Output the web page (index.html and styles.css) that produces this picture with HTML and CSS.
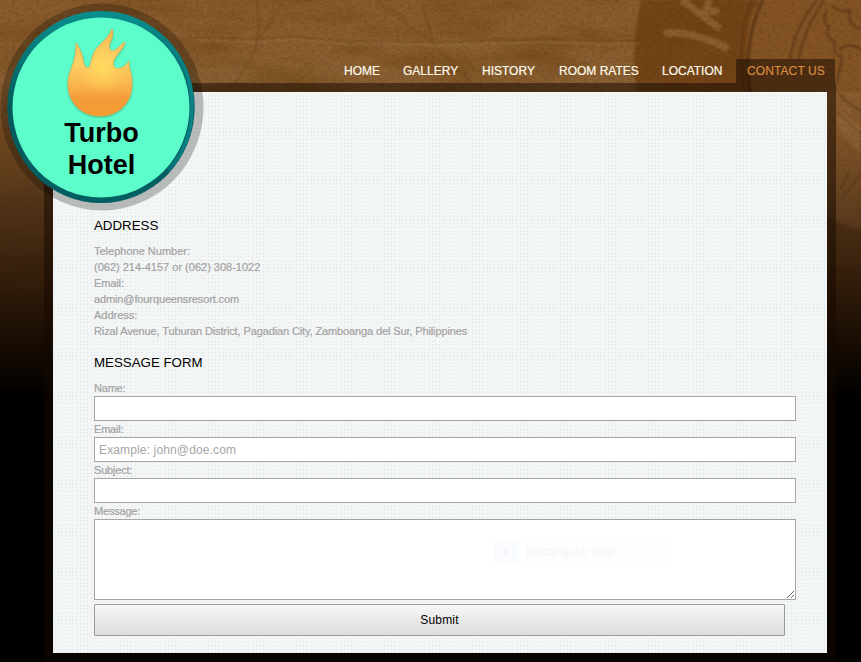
FILE: index.html
```
<!DOCTYPE html>
<html lang="en">
<head>
<meta charset="utf-8">
<title>Turbo Hotel - Contact Us</title>
<link rel="stylesheet" href="styles.css">
</head>
<body>
<svg class="backdrop" width="861" height="662" viewBox="0 0 861 662" aria-hidden="true">
  <defs>
    <linearGradient id="wood" x1="0" y1="0" x2="0" y2="400" gradientUnits="userSpaceOnUse">
      <stop offset="0" stop-color="#8b5c2d"/>
      <stop offset=".2" stop-color="#8b6133"/>
      <stop offset=".34" stop-color="#704821"/>
      <stop offset=".5" stop-color="#52351a"/>
      <stop offset=".7" stop-color="#321d0b"/>
      <stop offset=".86" stop-color="#170c02"/>
      <stop offset="1" stop-color="#000"/>
    </linearGradient>
    <linearGradient id="fade" x1="0" y1="0" x2="0" y2="300" gradientUnits="userSpaceOnUse">
      <stop offset="0" stop-color="#fff"/>
      <stop offset=".3" stop-color="#fff"/>
      <stop offset="1" stop-color="#000"/>
    </linearGradient>
    <mask id="fademask"><rect width="861" height="400" fill="url(#fade)"/></mask>
    <filter id="grain" x="0" y="0" width="100%" height="100%" color-interpolation-filters="sRGB">
      <feTurbulence type="fractalNoise" baseFrequency=".25 .4" numOctaves="3" seed="4"/>
      <feColorMatrix values="0 0 0 0 .25  0 0 0 0 .13  0 0 0 0 .03  1.3 0 0 0 -.48"/>
    </filter>
    <filter id="stain" x="0" y="0" width="100%" height="100%" color-interpolation-filters="sRGB">
      <feTurbulence type="fractalNoise" baseFrequency=".012 .04" numOctaves="3" seed="9"/>
      <feColorMatrix values="0 0 0 0 .44  0 0 0 0 .27  0 0 0 0 .08  1.4 0 0 0 -.6"/>
    </filter>
    <filter id="soft"><feGaussianBlur stdDeviation=".9"/></filter>
  </defs>
  <rect width="861" height="662" fill="#000"/>
  <rect width="861" height="400" fill="url(#wood)"/>
  <g mask="url(#fademask)">
    <rect width="861" height="400" filter="url(#stain)"/>
    <g filter="url(#soft)" fill="none">
      <path d="M641 0Q630 48 637 92H861V0Z" fill="#6c3d10" fill-opacity=".75"/>
      <path d="M664 33Q695 31 728 49M682 0L720 29M710 0L705 12L719 11" stroke="#946a38" stroke-width="7" stroke-opacity=".75"/>
      <path d="M759 0Q735 40 757 110Q782 208 861 230V0Z" fill="#936535" fill-opacity=".55"/>
      <path d="M763 0Q742 40 751 100Q775 205 861 234" stroke="#4c2a0b" stroke-width="3" stroke-opacity=".7"/>
      <path d="M752 0Q735 40 745 95" stroke="#4c2a0b" stroke-width="1.500" stroke-opacity=".6"/>
      <path d="M817 0Q793 30 790 60M824 0Q804 30 798 60M827 10Q821 20 829 27Q824 36 835 42Q831 53 842 57L837 83M832 5Q838 13 850 10Q846 25 861 29M839 50Q850 42 861 49M840 94Q846 103 861 111M838 113L861 134M840 190L850 171M842 198L861 174" stroke="#4c2a0b" stroke-width="2.200" stroke-opacity=".6"/>
      <path d="M839 112L861 126V154Q843 139 836 125Z" fill="#a57a49" fill-opacity=".4"/>
      <path d="M195 38L230 39L258 40L290 37L325 40L345 42L378 42L440 43L500 41L560 40L600 42L640 41" stroke="#5f3b18" stroke-width="1.200" stroke-opacity=".75"/>
      <path d="M195 40L230 41L258 42L290 39L325 42L345 44L378 43L440 45L500 43L560 42L600 44L640 43" stroke="#aa804c" stroke-width="1" stroke-opacity=".8"/>
      <path d="M234 84L251 59L256 45L259 25L257 4M259 38L283 2M375 0L420 34L433 41L422 5M390 7L408 22M433 44L470 82" stroke="#593612" stroke-width="1" stroke-opacity=".6"/>
    </g>
    <rect width="861" height="400" filter="url(#grain)" opacity=".32"/>
  </g>
</svg>
<div class="page">
  <nav class="menu">
    <a class="w-home">HOME</a><a class="w-gallery">GALLERY</a><a class="w-history">HISTORY</a><a class="w-rooms">ROOM RATES</a><a class="w-location">LOCATION</a><a class="current">CONTACT US</a>
  </nav>
  <main class="frame">
    <div class="panel">
      <h2>ADDRESS</h2>
      <p>Telephone Number:<br>(062) 214-4157 or (062) 308-1022<br><span class="tight">Email:</span><br><span class="tight">admin@fourqueensresort.com</span><br>Address:<br><span class="tight">Rizal Avenue, Tuburan District, Pagadian City, Zamboanga del Sur, Philippines</span></p>
      <h2 class="form-title">MESSAGE FORM</h2>
      <form>
        <label for="name">Name:</label>
        <input id="name" type="text">
        <label for="email">Email:</label>
        <input id="email" type="text" placeholder="Example: john@doe.com">
        <label for="subject">Subject:</label>
        <input id="subject" type="text">
        <label for="message">Message:</label>
        <div class="message-box">
          <textarea id="message"></textarea>
          <div class="snip"><span class="snip-icon"><i></i></span><span class="snip-text">Rectangular Snip</span></div>
        </div>
        <button type="button">Submit</button>
      </form>
    </div>
  </main>
</div>
<div class="logo">
  <svg class="badge" width="204" height="212" viewBox="0 0 204 212" aria-hidden="true">
    <defs>
      <linearGradient id="ring" x1="0" y1="0" x2="0" y2="1">
        <stop offset="0" stop-color="#098f8f"/><stop offset=".5" stop-color="#04595b"/><stop offset="1" stop-color="#026063"/>
      </linearGradient>
      <linearGradient id="ringlight" x1="140" y1="0" x2="194" y2="0" gradientUnits="userSpaceOnUse">
        <stop offset="0" stop-color="#0b8588" stop-opacity="0"/><stop offset="1" stop-color="#0b8588"/>
      </linearGradient>
      <linearGradient id="flame" x1="0" y1="28" x2="0" y2="118" gradientUnits="userSpaceOnUse">
        <stop offset="0" stop-color="#f3bc50"/><stop offset=".38" stop-color="#fdd066"/><stop offset=".62" stop-color="#fab64e"/><stop offset=".8" stop-color="#f49a37"/><stop offset="1" stop-color="#f69c31"/>
      </linearGradient>
      <radialGradient id="shine" cx="103" cy="70" r="24" gradientUnits="userSpaceOnUse">
        <stop offset="0" stop-color="#ffe05b" stop-opacity=".75"/><stop offset="1" stop-color="#ffd957" stop-opacity="0"/>
      </radialGradient>
      <filter id="glow" x="-20%" y="-20%" width="140%" height="140%"><feGaussianBlur stdDeviation="1.3"/></filter>
      <path id="fire" d="M76 43C80 49 82 54 83 60C84 65 85 68 88 68C91 67 91 59 94 53C98 44 108 40 112 29C115 35 109 43 109 47C110 53 115 51 118 48C121 45 123 43 125 42C124 49 113 57 113 64C114 70 119 69 123 67C126 65 128 63 129 61C128 68 132 73 132 82C133 103 118 116 100 116C81 116 68 102 68 84C68 70 77 63 76 43Z"/>
    </defs>
    <ellipse cx="102" cy="107" rx="101.500" ry="103.500" fill="#000" fill-opacity=".24"/>
    <ellipse cx="101" cy="107" rx="93.700" ry="96" fill="url(#ring)"/>
    <path d="M140 24Q192 50 192 107Q192 145 168 170" fill="none" stroke="url(#ringlight)" stroke-width="3.500"/>
    <ellipse cx="101" cy="107.500" rx="88.500" ry="90" fill="#5cfdca"/>
    <use href="#fire" fill="#47805a" opacity=".8" filter="url(#glow)" transform="translate(0 1)"/>
    <use href="#fire" fill="url(#flame)" stroke="#f1b052" stroke-width=".8"/>
    <use href="#fire" fill="url(#shine)"/>
  </svg>
  <div class="logo-text">Turbo<br>Hotel</div>
</div>
</body>
</html>
```
FILE: styles.css
```
* { box-sizing: border-box; }
html, body { margin: 0; height: 662px; overflow: hidden; background: #000; }
body { position: relative; font-family: "Liberation Sans", Arial, sans-serif; }
.backdrop { position: absolute; inset: 0; }
.page { position: relative; width: 792px; margin-left: 44px; padding-top: 59px; }
.menu { display: flex; justify-content: flex-end; height: 24px; padding-right: 1px; }
.menu a { height: 24px; padding-left: 11px; font-size: 12px; line-height: 24px; color: #fffbed; white-space: nowrap; -webkit-text-stroke: .2px currentColor; }
.w-home { width: 59px; }
.w-gallery { width: 79px; }
.w-history { width: 77px; }
.w-rooms { width: 103px; }
.w-location { width: 85px; }
.menu .current { width: 99px; color: #d98b3d; background: rgba(20, 8, 0, .5); letter-spacing: .1px; }
.frame { height: 579px; padding: 9px; background: rgba(20, 8, 0, .5); }
/* Dotted paper: opaque rows leave one-pixel gaps over the dotted columns. */
.panel {
  height: 561px;
  padding: 125px 31px 0 41px;
  background-color: #f4f5f5;
  background-image:
    repeating-linear-gradient(to bottom, #f4f5f5 0 3px, transparent 3px 4px, #f4f5f5 4px 7px, transparent 7px 8px, #f4f5f5 8px 10px, transparent 10px 11px),
    repeating-linear-gradient(to right, transparent 0 1px, #d5e4ec 1px 2px, transparent 2px 5px, #d5e4ec 5px 6px, transparent 6px 8px, #dde5ea 8px 9px, transparent 9px 11px);
}
h2 { margin: 0; height: 17px; font-size: 13.3px; line-height: 17px; font-weight: normal; color: #000; }
p { margin: 9px 0 0; font-size: 11px; line-height: 16px; color: #a2a2a2; -webkit-text-stroke: .2px currentColor; }
.tight { letter-spacing: -.12px; }
.form-title { margin-top: 15px; }
form { display: flex; flex-direction: column; align-items: flex-start; margin-top: 10px; }
label { height: 15px; font-size: 11px; line-height: 15px; color: #a2a2a2; letter-spacing: -.2px; -webkit-text-stroke: .2px currentColor; }
input, textarea { width: 702px; margin: 0; border: 1px solid #a5a5a5; border-radius: 0; background: #fff; outline: 0; }
input { height: 25px; padding: 2px 4px; margin-bottom: 1px; font: 12px/18px "Liberation Sans", Arial, sans-serif; }
input::placeholder { color: #a6a6a6; opacity: 1; letter-spacing: .14px; }
.message-box { position: relative; height: 81px; }
textarea { display: block; height: 81px; resize: vertical; }
.snip { position: absolute; left: 400px; top: 22px; display: flex; width: 173px; height: 22px; border: 1px solid #f8fdfd; background: #fdfffe; }
.snip-icon { display: flex; width: 22px; margin-left: -1px; background: #fafcff; border: 1px solid #f3faff; align-items: center; justify-content: center; }
.snip-icon i { width: 6px; height: 6px; border-radius: 50%; background: #f4f5f6; }
.snip-text { padding-left: 10px; font: 12px/20px "Open Sans", sans-serif; letter-spacing: -.3px; color: #f7f3f3; }
button { width: 691px; height: 32px; margin: 4px 0 0; padding: 0; border: 1px solid #999; border-radius: 1px; background: linear-gradient(#f7f7f7, #dcdcdc); font: 12px "Liberation Sans", Arial, sans-serif; letter-spacing: .2px; color: #000; }
.logo { position: absolute; left: 0; top: 0; width: 204px; height: 212px; }
.badge { display: block; }
.logo-text { position: absolute; left: 0; top: 117px; width: 203px; text-align: center; font-size: 27px; line-height: 32px; font-weight: bold; color: #000; }
```
